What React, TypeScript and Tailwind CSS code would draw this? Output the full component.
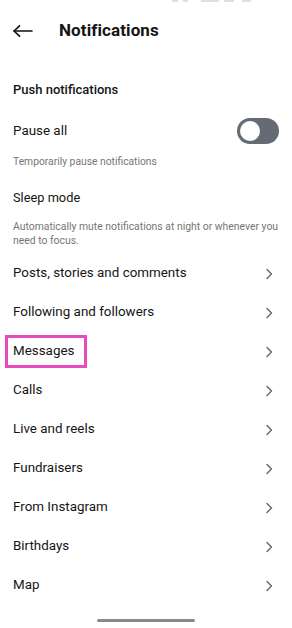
const rows = [
  "Posts, stories and comments",
  "Following and followers",
  "Messages",
  "Calls",
  "Live and reels",
  "Fundraisers",
  "From Instagram",
  "Birthdays",
  "Map",
];

function Chevron() {
  return (
    <svg width="12" height="12" viewBox="0 0 12 12" fill="none" stroke="#6b6b6b" strokeWidth="1.5" strokeLinecap="round" strokeLinejoin="round">
      <polyline points="4,1.5 8.5,6 4,10.5" />
    </svg>
  );
}

export default function App() {
  return (
    <div className="relative w-[292px] h-[628px] bg-white text-[#151515] overflow-hidden" style={{ fontFamily: "Roboto, 'Noto Sans', sans-serif" }}>
      {/* cut-off status bar */}
      <div className="absolute top-0 left-[172px] flex gap-[5px] opacity-25">
        <div className="w-[6px] h-[2px] bg-[#888]" />
        <div className="w-[5px] h-[2px] bg-[#888]" />
        <div className="w-[18px] h-[2px] bg-[#888] ml-[8px]" />
        <div className="w-[10px] h-[2px] bg-[#888]" />
        <div className="w-[9px] h-[2px] bg-[#888] ml-[3px]" />
      </div>

      <div className="h-[62px] flex items-center px-[13px]">
        <svg width="20" height="12" viewBox="0 0 20 12" fill="none" stroke="#111" strokeWidth="1.6" strokeLinecap="round" strokeLinejoin="round">
          <line x1="1" y1="6" x2="19" y2="6" />
          <polyline points="6.5,0.8 1,6 6.5,11.2" />
        </svg>
        <div className="ml-[26px] text-[17px] font-bold tracking-[0.1px]">Notifications</div>
      </div>

      <div className="h-[56px] flex items-center px-[13px] text-[13px] font-medium">Push notifications</div>

      <div className="h-[26px] flex items-center justify-between pl-[13px] pr-[13px]">
        <span className="text-[13.4px]">Pause all</span>
        <div className="w-[42px] h-[26px] rounded-full bg-[#646b74] flex items-center pl-[3px]">
          <div className="w-[20px] h-[20px] rounded-full bg-white" />
        </div>
      </div>

      <div className="h-[36px] flex items-center px-[13px] text-[10.3px] text-[#767676]">Temporarily pause notifications</div>
      <div className="h-[36px] flex items-center px-[13px] text-[12.8px]">Sleep mode</div>
      <div className="mt-[4px] px-[13px] text-[10.4px] leading-[14px] text-[#767676]">
        Automatically mute notifications at night or whenever you need to focus.
      </div>

      <div className="mt-[6px] flex flex-col">
        {rows.map((r) => (
          <div key={r} className="h-[39px] flex items-center justify-between pl-[13px] pr-[17px]">
            {r === "Messages" ? (
              <span className="relative text-[13.4px]">
                {r}
                <span className="absolute left-[-8px] right-[-13px] top-[-6px] bottom-[-6px] border-[3px] border-[#e64cc0]" />
              </span>
            ) : (
              <span className="text-[13.4px]">{r}</span>
            )}
            <Chevron />
          </div>
        ))}
      </div>

      <div className="mt-[14px] mx-auto w-[98px] h-[3px] rounded-full bg-[#8a8a8a]" />
    </div>
  );
}
